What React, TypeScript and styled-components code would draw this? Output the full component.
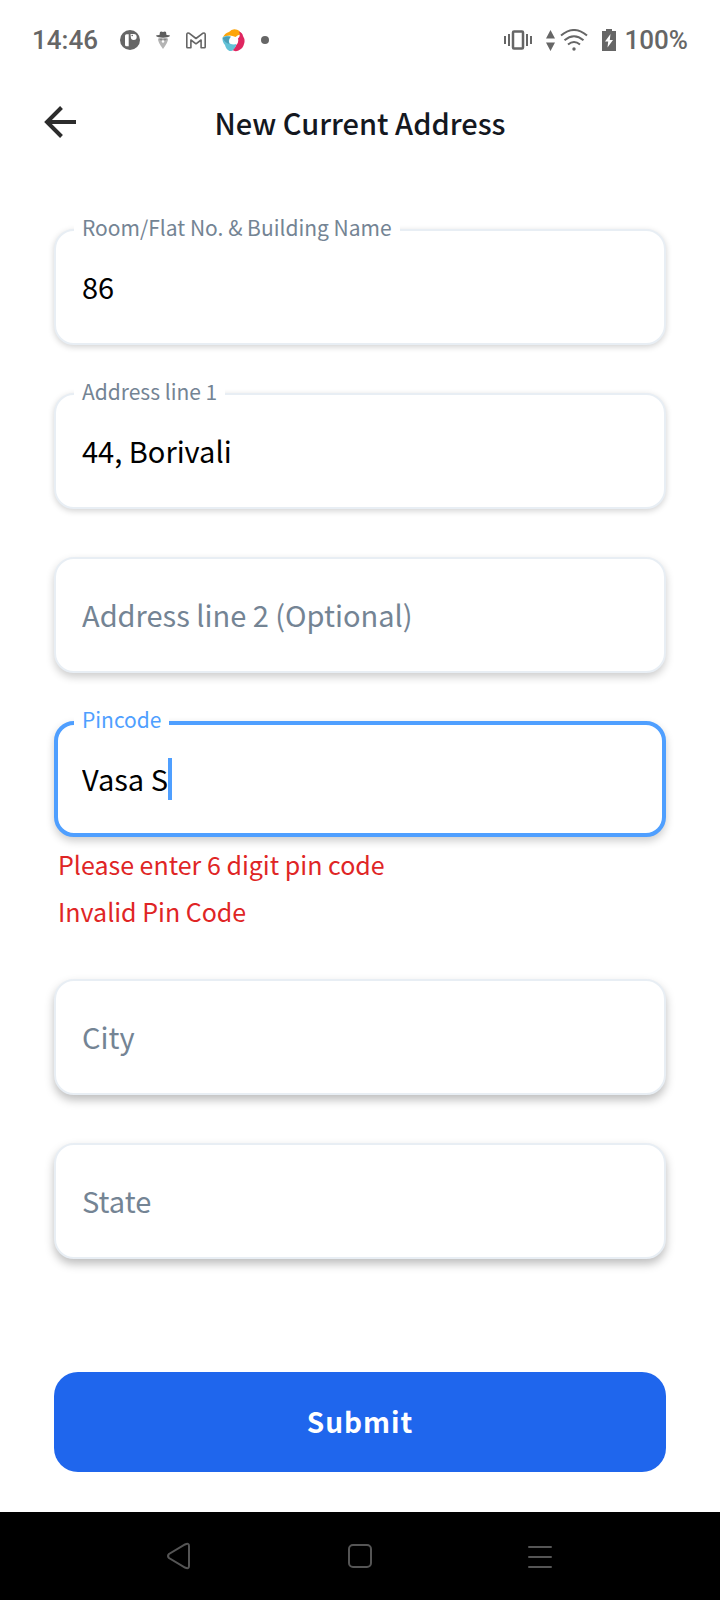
import { useState } from "react";
import type { ReactNode } from "react";
import styled, { createGlobalStyle, css } from "styled-components";

const GlobalStyle = createGlobalStyle`
  *, *::before, *::after { box-sizing: border-box; }
  body {
    margin: 0;
    background: #ffffff;
    color: #000000;
    font-family: "Noto Sans CJK SC", "Noto Sans", sans-serif;
  }
  button, input { font: inherit; color: inherit; }
`;

const Screen = styled.div`
  display: flex;
  flex-direction: column;
  min-height: 100vh;
`;

const StatusBar = styled.header`
  display: flex;
  align-items: center;
  justify-content: space-between;
  height: 80px;
  padding: 0 32px;
  color: #666666;
  font-family: Roboto, sans-serif;
  font-size: 26px;
  font-weight: 500;
  line-height: 32px;
`;

const StatusGroup = styled.div<{ $gap: number }>`
  display: flex;
  align-items: center;
  gap: ${({ $gap }) => $gap}px;
`;

const Dot = styled.span`
  width: 8px;
  height: 8px;
  border-radius: 50%;
  background: #666666;
`;

const TitleBar = styled.div`
  display: grid;
  grid-template-columns: 80px 1fr 80px;
  align-items: center;
  height: 84px;
  padding: 0 20px;
`;

const IconButton = styled.button`
  display: flex;
  align-items: center;
  justify-content: center;
  height: 80px;
  padding: 0;
  border: 0;
  background: transparent;
`;

const Title = styled.h1`
  margin: 0;
  color: #14181f;
  font-size: 29px;
  font-weight: 500;
  line-height: 40px;
  text-align: center;
`;

const Form = styled.form`
  display: flex;
  flex: 1;
  flex-direction: column;
  padding: 65px 54px 40px;
`;

const Fields = styled.div`
  display: flex;
  flex-direction: column;
  gap: 48px;
  margin-bottom: 48px;
`;

const shadows = {
  low: "0 2px 6px rgba(0, 0, 0, 0.18)",
  mid: "0 4px 8px rgba(0, 0, 0, 0.2)",
  high: "0 5px 10px rgba(0, 0, 0, 0.26)",
};

const Box = styled.div<{ $active: boolean; $depth: keyof typeof shadows }>`
  position: relative;
  display: flex;
  align-items: center;
  height: 116px;
  padding: 0 ${({ $active }) => ($active ? 24 : 26)}px;
  border: ${({ $active }) => ($active ? "4px solid #4f9fff" : "2px solid #e8eef4")};
  border-radius: 20px;
  background: #ffffff;
  box-shadow: ${({ $depth }) => shadows[$depth]};
`;

const Label = styled.label<{ $active: boolean }>`
  position: absolute;
  top: ${({ $active }) => ($active ? -22 : -20)}px;
  left: ${({ $active }) => ($active ? 16 : 18)}px;
  padding: 0 8px;
  background: #ffffff;
  color: ${({ $active }) => ($active ? "#4f9fff" : "#748494")};
  font-size: 21px;
  line-height: 32px;
  white-space: nowrap;
`;

const Input = styled.input<{ $active: boolean }>`
  flex: 1;
  min-width: 0;
  height: 100%;
  padding: 0 0 3px;
  border: 0;
  outline: 0;
  background: transparent;
  font-size: 29px;
  line-height: 40px;
  caret-color: #4f9fff;

  ${({ $active }) =>
    $active &&
    css`
      flex: none;
      field-sizing: content;
      caret-color: transparent;
    `}

  &::placeholder {
    color: #748494;
    opacity: 1;
  }
`;

const Caret = styled.span`
  width: 4px;
  height: 42px;
  background: #4f9fff;
`;

const Errors = styled.div`
  display: flex;
  flex-direction: column;
  gap: 7px;
  padding: 7px 4px 0;
  color: #df2525;
  font-size: 25px;
  line-height: 40px;
`;

const ErrorText = styled.p`
  margin: 0;
`;

const SubmitButton = styled.button`
  height: 100px;
  margin-top: auto;
  padding: 0 0 3px;
  border: 0;
  border-radius: 24px;
  background: #1f66ed;
  color: #ffffff;
  font-size: 28px;
  font-weight: 700;
  line-height: 40px;
  letter-spacing: 1px;
`;

const NavBar = styled.nav`
  display: grid;
  grid-template-columns: repeat(3, 1fr);
  height: 88px;
  padding: 0 90px;
  background: #000000;
`;

const NavButton = styled(IconButton)`
  height: 88px;
  color: #555555;
`;

const ChatIcon = () => (
  <svg width="20" height="20" viewBox="0 0 20 20" aria-hidden="true">
    <circle cx="10" cy="10" r="10" fill="#666" />
    <path d="M6.500 4.200h2.200v12H6.500A1.500 1.500 0 0 1 5 14.700v-9a1.500 1.500 0 0 1 1.500-1.500z" fill="#fff" />
    <path d="M10.500 4h3.200a2.900 2.900 0 0 1 0 6 2.900 2.900 0 0 1-2.900-2.900z" fill="#fff" />
    <circle cx="12.200" cy="5.500" r=".8" fill="#666" />
  </svg>
);

const SpyIcon = () => (
  <svg width="14" height="18" viewBox="0 0 14 18" aria-hidden="true">
    <path d="M2 7.500h10q.5 3-5 10.500Q1.500 10.500 2 7.500z" fill="#b4b4b4" />
    <path d="M3.500 4 4 1Q5 0 7 1 9 0 10 1l.5 3Q14 4 14 5q-2 1.700-7 1.700T0 5q0-1 3.500-1z" fill="#5e5e5e" />
    <path d="M3 7.500h3.500v1.800H4zM7.500 7.500H11l-1 1.800H7.500z" fill="#888" />
    <circle cx="7" cy="10.500" r="1.200" fill="#fff" />
  </svg>
);

const MailIcon = () => (
  <svg width="20" height="17" viewBox="0 0 20 17" fill="none" stroke="#666" strokeWidth="1.600" strokeLinejoin="round" aria-hidden="true">
    <path d="M.8 15V2.500Q1 .5 3 1.200L10 6.500l7-5.300q2-.7 2.200 1.300V15q0 .8-.8.8h-3.300V8L10 11.800 4.900 8v7.800H1.600Q.8 15.800.8 15z" />
  </svg>
);

const SwirlIcon = () => (
  <svg width="23" height="23" viewBox="0 0 23 23" aria-hidden="true">
    <path d="M1 8Q3 4 7 3 10-.5 14 .5q4 .5 5 5-3.500 0-5.500 2.500Q8 5 1 8z" fill="#fda50b" />
    <path d="M17 2.500q3.500 1 4 4.500 2.500 4 1 8-1 4.500-5.500 6.500-3.500 1.500-6-.5 2.500-2 3.500-4.500 3-2.500 2-7 3-2.500 1-7z" fill="#df2660" />
    <path d="M.5 8.500Q4.500 5.500 9 7.500 6 11 7.500 14.500q4 1.500 7 .5-.5 3-3 5.500-1 2-4 1.500Q4 20.500 3 16 .2 13 .5 8.500z" fill="#63c2d7" />
    <path d="M.6 9Q4 7 8.500 8 5.500 11 7.500 15 3 14 .6 9z" fill="#4b9fb8" />
  </svg>
);

const VibrateIcon = () => (
  <svg width="28" height="20" viewBox="0 0 28 20" fill="none" stroke="#666" strokeWidth="2" aria-hidden="true">
    <rect x="9" y="1.500" width="10" height="17" rx="1" strokeWidth="2.500" />
    <path d="M1 6v8M5 4v12M23 4v12M27 6v8" />
  </svg>
);

const DataIcon = () => (
  <svg width="9" height="21" viewBox="0 0 9 21" fill="#666" aria-hidden="true">
    <path d="M4.500 0 9 8.500H0zM4.500 21 9 12.500H0z" />
  </svg>
);

const WifiIcon = () => (
  <svg width="28" height="22" viewBox="0 0 28 22" fill="none" stroke="#666" strokeWidth="2" aria-hidden="true">
    <path d="M1 6.500Q14-4.500 27 6.500M4.500 11.200q9.500-8 19 0M8 15.500q6-5 12 0" />
    <circle cx="14" cy="20" r="1.700" fill="#666" stroke="none" />
  </svg>
);

const BatteryIcon = () => (
  <svg width="14" height="22" viewBox="0 0 14 22" aria-hidden="true">
    <path d="M4 0h6v2h4v20H0V2h4z" fill="#666" />
    <path d="M8.500 5 3 12.500h3.200L5.500 18.500 11 11H7.800z" fill="#fff" />
  </svg>
);

const BackArrow = () => (
  <svg width="32" height="32" viewBox="0 0 32 32" fill="none" stroke="#2c2c2c" strokeWidth="4" aria-hidden="true">
    <path d="M32 16H3M17.500 1.500 3 16l14.500 14.500" />
  </svg>
);

const NavIcon = ({ children }: { children: ReactNode }) => (
  <svg width="26" height="28" viewBox="0 0 26 28" fill="none" stroke="currentColor" strokeWidth="2" strokeLinecap="round" aria-hidden="true">
    {children}
  </svg>
);

type FieldProps = {
  id: string;
  label: string;
  initial?: string;
  active?: boolean;
  depth?: keyof typeof shadows;
  errors?: string[];
};

function Field({ id, label, initial = "", active = false, depth = "mid", errors }: FieldProps) {
  const [value, setValue] = useState(initial);
  const floating = value !== "" || active;
  return (
    <div>
      <Box $active={active} $depth={depth}>
        {floating && (
          <Label htmlFor={id} $active={active}>
            {label}
          </Label>
        )}
        <Input
          id={id}
          $active={active}
          value={value}
          placeholder={floating ? undefined : label}
          aria-label={floating ? undefined : label}
          aria-invalid={errors ? true : undefined}
          aria-describedby={errors ? `${id}-errors` : undefined}
          onChange={(event) => setValue(event.target.value)}
        />
        {active && <Caret />}
      </Box>
      {errors && (
        <Errors id={`${id}-errors`}>
          {errors.map((message) => (
            <ErrorText key={message}>{message}</ErrorText>
          ))}
        </Errors>
      )}
    </div>
  );
}

export default function App() {
  return (
    <>
      <GlobalStyle />
      <Screen>
        <StatusBar>
          <StatusGroup $gap={22}>
            <span>14:46</span>
            <StatusGroup $gap={16}>
              <ChatIcon />
              <SpyIcon />
              <MailIcon />
              <SwirlIcon />
              <Dot />
            </StatusGroup>
          </StatusGroup>
          <StatusGroup $gap={9}>
            <StatusGroup $gap={14}>
              <VibrateIcon />
              <StatusGroup $gap={5}>
                <DataIcon />
                <WifiIcon />
              </StatusGroup>
              <BatteryIcon />
            </StatusGroup>
            <span>100%</span>
          </StatusGroup>
        </StatusBar>
        <TitleBar>
          <IconButton type="button" aria-label="Back">
            <BackArrow />
          </IconButton>
          <Title>New Current Address</Title>
        </TitleBar>
        <Form onSubmit={(event) => event.preventDefault()}>
          <Fields>
            <Field id="room" label="Room/Flat No. & Building Name" initial="86" depth="low" />
            <Field id="line1" label="Address line 1" initial="44, Borivali" depth="low" />
            <Field id="line2" label="Address line 2 (Optional)" />
            <Field
              id="pincode"
              label="Pincode"
              initial="Vasa S"
              active
              errors={["Please enter 6 digit pin code", "Invalid Pin Code"]}
            />
            <Field id="city" label="City" depth="high" />
            <Field id="state" label="State" depth="high" />
          </Fields>
          <SubmitButton type="submit">Submit</SubmitButton>
        </Form>
        <NavBar>
          <NavButton type="button" aria-label="Back">
            <NavIcon>
              <path d="M18 2.500Q22 .5 22 4v20q0 3.500-4 1.500L2 16q-2-2 0-4z" />
            </NavIcon>
          </NavButton>
          <NavButton type="button" aria-label="Home">
            <NavIcon>
              <rect x="2" y="3" width="22" height="22" rx="4" />
            </NavIcon>
          </NavButton>
          <NavButton type="button" aria-label="Recent apps">
            <NavIcon>
              <path d="M2 5h22M2 15h22M2 25h22" />
            </NavIcon>
          </NavButton>
        </NavBar>
      </Screen>
    </>
  );
}
